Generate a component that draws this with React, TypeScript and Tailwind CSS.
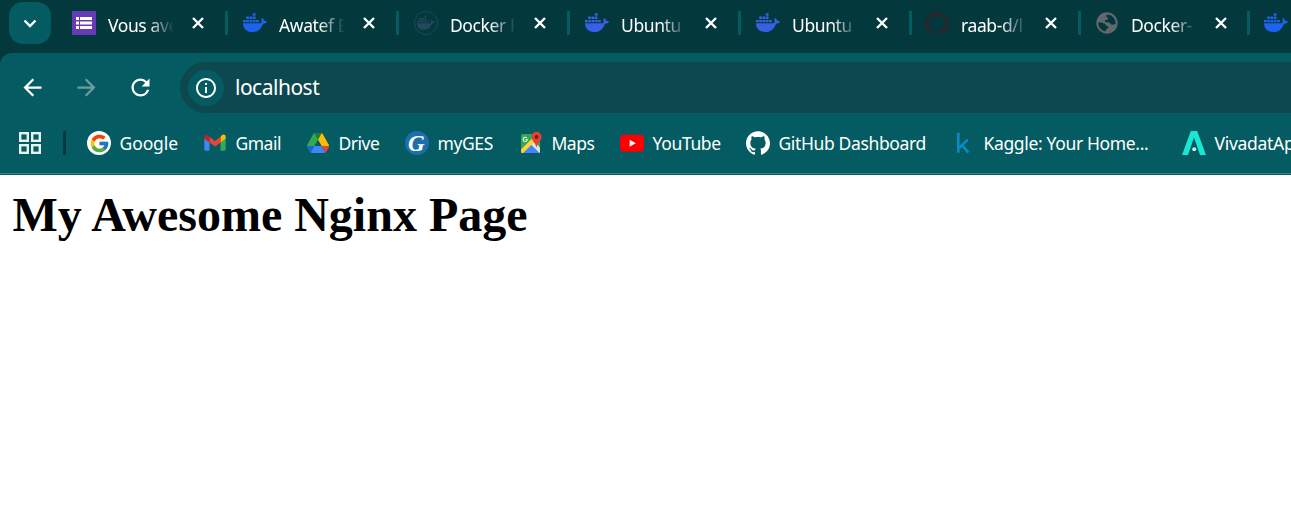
import type { ReactNode } from "react";
import { FcGoogle } from "react-icons/fc";
import { MdArrowBack, MdArrowForward, MdInfoOutline, MdRefresh } from "react-icons/md";
import { SiGithub } from "react-icons/si";

function Whale({ size = 24, color = "currentColor" }: { size?: number; color?: string }) {
  return (
    <svg width={size} height={size} viewBox="0 0 24 24" fill={color} className="shrink-0">
      <path d="M0 12.200h17c.9 0 1.500-.4 1.800-1-.7-1.500-.5-3.100.5-4.200 1 .7 1.700 1.700 1.800 2.900 1-.2 2.100 0 2.900.6-.6 1.500-2 2.200-3.900 2.200-1.800 4.900-5.100 8.300-10.300 8.300C3.800 21 0 17.900 0 12.200z" />
      <path d="M0 8.900h2.700v2.400H0zM3.200 8.900h2.700v2.400H3.200zM6.500 8.900h2.700v2.400H6.500zM9.800 8.900h2.700v2.400H9.800zM13.100 8.900h2.700v2.400h-2.700zM3.200 5.500h2.700v2.600H3.200zM6.500 5.500h2.700v2.600H6.500zM9.800 5.500h2.700v2.600H9.800zM9.800 2.200h2.700v2.500H9.800z" />
    </svg>
  );
}

function FormsIcon() {
  return (
    <svg width="24" height="24" viewBox="0 0 24 24">
      <rect width="24" height="24" rx="1" fill="#673ab7" />
      <g fill="#fff">
        <rect x="4" y="6" width="3" height="3" /><rect x="8" y="6" width="12" height="3" />
        <rect x="4" y="10.5" width="3" height="3" /><rect x="8" y="10.5" width="12" height="3" />
        <rect x="4" y="15" width="3" height="3" /><rect x="8" y="15" width="12" height="3" />
      </g>
    </svg>
  );
}

function DockerHubIcon() {
  return (
    <span className="flex size-6 items-center justify-center rounded-full border-[1.5px] border-[#23475c] text-[#23475c]">
      <Whale size={18} />
    </span>
  );
}

function GlobeIcon() {
  return (
    <svg width="24" height="24" viewBox="0 0 24 24">
      <circle cx="12" cy="12" r="10.7" fill="#63686d" />
      <path d="M12.500 3.600c-.8.300-1.300 1-1.200 1.800.1.900 1 1.300 1.800 1.200.5 1.200-.2 1.900-1.200 2.200-1.300.2-2.200.6-2 1.700.2.900 1.400.7 2.400.7 1.400 0 2.600.5 3.300 1.600.7 1 2 1 3.200.6.7-.2 1.200-.2 1.900-.4A8.800 8.800 0 0 0 12.500 3.600z" fill="#03383d" />
      <path d="M3.200 11.600c2.300-.3 4.700.1 6.300 1 1.300.8 1.200 2 2.100 2.500.8.400 1.900.2 1.900 1.100 0 1-1.300 1.200-2.100 2-.6.7-.4 1.700-1.200 2.300A8.900 8.900 0 0 1 3.200 11.600z" fill="#03383d" />
    </svg>
  );
}

function CloseIcon() {
  return (
    <svg width="12" height="12" viewBox="0 0 12 12" className="shrink-0">
      <path d="M1 1l10 10M11 1L1 11" stroke="#fff" strokeWidth="2.4" />
    </svg>
  );
}

function GmailIcon() {
  return (
    <svg width="24" height="24" viewBox="0 0 24 24">
      <path d="M1.300 7v11.300c0 .8.700 1.500 1.500 1.500h3.700V9.500z" fill="#4285f4" />
      <path d="M22.700 7v11.300c0 .8-.7 1.500-1.500 1.500h-3.700V9.500z" fill="#34a853" />
      <path d="M17.500 5.800v5.700l5.200-3.900V5.800c0-2-2.200-2.900-3.700-1.700z" fill="#fbbc04" />
      <path d="M6.500 11.500V5.800l5.500 4.100 5.500-4.100v5.700L12 15.600z" fill="#ea4335" />
      <path d="M1.300 5.800v1.800l5.200 3.900V5.800L5 4.500c-1.500-1.100-3.700-.4-3.700 1.300z" fill="#c5221f" />
    </svg>
  );
}

function DriveIcon() {
  return (
    <svg width="24" height="24" viewBox="0 0 24 24">
      <path d="M8.300 2h7.400L12 8.700z" fill="#188038" />
      <path d="M8.300 2C7.800 2.300 7.500 2.700 7.200 3.200L1.500 13.200c-.4.600-.5 1-.5 1.800h7.300L12 8.700z" fill="#34a853" />
      <path d="M15.700 2c.5.3.9.700 1.200 1.200l5.600 10c.4.600.5 1 .5 1.800h-7.300L12 8.700z" fill="#fbbc04" />
      <path d="M1 15h7.300l-3.600 6.500c-.6-.3-1-.8-1.300-1.300L1.500 17c-.3-.6-.5-1.200-.5-2z" fill="#1967d2" />
      <path d="M8.300 15h7.400l3.600 6.500c-.5.300-1 .5-1.600.5H6.300c-.6 0-1.100-.2-1.600-.5z" fill="#4285f4" />
      <path d="M15.700 15H23c0 .8-.2 1.400-.5 2l-1.900 3.200c-.3.500-.7 1-1.300 1.300z" fill="#ea4335" />
    </svg>
  );
}

function GesIcon() {
  return (
    <span className="flex size-6 items-center justify-center rounded-full bg-[#1b6fae] pr-0.5 font-['Liberation_Serif',serif] text-[23px] leading-none font-bold text-white italic">
      G
    </span>
  );
}

function MapsIcon() {
  return (
    <svg width="24" height="24" viewBox="0 0 24 24">
      <rect x="2" y="3" width="19" height="19" rx="1.500" fill="#34a853" />
      <path d="M4 22L12 13.500 20.500 22z" fill="#4285f4" />
      <path d="M12 13.500l3-3 6 6V21c0 .5-.2.800-.5 1z" fill="#dfe3e8" />
      <path d="M2 18.500L13.500 7l3 3L4 22h-.5A1.500 1.500 0 0 1 2 20.500z" fill="#ffd33c" />
      <path d="M8.800 8.100H6.600v1h1.100c-.2.700-.7 1-1.300 1a1.600 1.600 0 1 1 1-2.800l.7-.7a2.600 2.600 0 1 0 .7 1.500z" fill="#fff" />
      <path d="M17.500.8a5.100 5.100 0 0 0-5.100 5.100c0 3.700 4.100 5.300 5.100 10.800 1-5.500 5.100-7.100 5.100-10.800A5.100 5.100 0 0 0 17.500.8z" fill="#e34133" />
      <circle cx="17.500" cy="6" r="1.900" fill="#7c1b15" />
    </svg>
  );
}

function YoutubeIcon() {
  return (
    <svg width="24" height="24" viewBox="0 0 24 24">
      <rect x="0" y="3.700" width="24" height="17" rx="4" fill="#f00" />
      <path d="M9.600 8.700v7l6.200-3.500z" fill="#fff" />
    </svg>
  );
}

function KaggleIcon() {
  return (
    <svg width="24" height="24" viewBox="0 0 24 24" fill="none" stroke="#0a8bc4" strokeWidth="2.600">
      <path d="M7.300 1.800v20M16.800 8.600l-8.600 8.100M10.700 13.600l6.700 8" />
    </svg>
  );
}

function VivadataIcon() {
  return (
    <svg width="24" height="24" viewBox="0 0 24 24">
      <path d="M8.800 0h6.400L24 24h-6L12 6.500 6 24H0z" fill="#19e6d3" />
      <circle cx="12.200" cy="18.300" r="2" fill="#d5e9ea" />
    </svg>
  );
}

type Entry = { icon: ReactNode; title: string; slot: string };

const tabs: Entry[] = [
  { icon: <FormsIcon />, title: "Vous avez", slot: "w-[171px]" },
  { icon: <Whale color="#1d63ed" />, title: "Awatef E", slot: "w-[171px]" },
  { icon: <DockerHubIcon />, title: "Docker H", slot: "w-[171px]" },
  { icon: <Whale color="#3860e4" />, title: "Ubuntu", slot: "w-[171px]" },
  { icon: <Whale color="#3860e4" />, title: "Ubuntu", slot: "w-[169px]" },
  { icon: <SiGithub size={24} color="#24292e" />, title: "raab-d/l", slot: "w-[170px]" },
  { icon: <GlobeIcon />, title: "Docker-", slot: "w-[169px]" },
];

const bookmarks: Entry[] = [
  {
    icon: (
      <span className="flex size-6 items-center justify-center rounded-full bg-white">
        <FcGoogle size={21} />
      </span>
    ),
    title: "Google", slot: "w-[116px] tracking-[-0.100px]",
  },
  { icon: <GmailIcon />, title: "Gmail", slot: "w-[103px] tracking-[-0.500px]" },
  { icon: <DriveIcon />, title: "Drive", slot: "w-[99px] tracking-[-0.500px]" },
  { icon: <GesIcon />, title: "myGES", slot: "w-[114px] tracking-[-0.400px]" },
  { icon: <MapsIcon />, title: "Maps", slot: "w-[101px] tracking-[-0.500px]" },
  { icon: <YoutubeIcon />, title: "YouTube", slot: "w-[126px] tracking-[-0.350px]" },
  { icon: <SiGithub size={24} color="#fff" />, title: "GitHub Dashboard", slot: "w-[205px] tracking-[-0.370px]" },
  { icon: <KaggleIcon />, title: "Kaggle: Your Home...", slot: "w-[231px] tracking-[-0.350px]" },
  { icon: <VivadataIcon />, title: "VivadatApp", slot: "w-[140px] tracking-[-0.300px]" },
];

export default function App() {
  return (
    <div className="flex h-[521px] w-full flex-col overflow-hidden bg-white font-['Noto_Sans',sans-serif] text-white">
      <div className="flex h-[53px] shrink-0 overflow-hidden bg-[#03383d]">
        <div className="mt-0.5 ml-[9px] flex h-[42px] w-[42px] shrink-0 items-center justify-center rounded-[14px] bg-[#045b62]">
          <svg width="14" height="9" viewBox="0 0 14 9">
            <path d="M1.500 1.500L7 7l5.500-5.500" fill="none" stroke="#fff" strokeWidth="2.400" />
          </svg>
        </div>
        <div className="ml-[21px] flex pt-[11px]">
          {tabs.map((tab, i) => (
            <div key={i} className={`flex h-6 shrink-0 items-center ${tab.slot}`}>
              <span className="flex w-6 shrink-0 justify-center">{tab.icon}</span>
              <span className="ml-3 w-[66px] shrink-0 overflow-hidden mask-r-from-60% mask-r-to-100% pt-[3px] text-[17.5px] leading-6 tracking-[-0.400px] whitespace-nowrap">
                {tab.title}
              </span>
              <span className="ml-[18px] flex"><CloseIcon /></span>
              <span className="ml-auto h-6 w-[3px] shrink-0 bg-[#045b62]" />
              <span className={i < 4 ? "w-[15px] shrink-0" : i === 4 ? "w-[13px] shrink-0" : "w-[14px] shrink-0"} />
            </div>
          ))}
          <Whale color="#1d63ed" />
        </div>
      </div>

      <div className="shrink-0 bg-[#03383d]">
        <div className="flex h-[122px] flex-col rounded-tl-[12px] bg-[#045b62]">
          <div className="flex h-[60px] shrink-0 items-center pt-[9px]">
            <MdArrowBack size={27} className="ml-[19px] shrink-0" />
            <MdArrowForward size={27} className="ml-[27px] shrink-0 text-[#6d9da1]" />
            <MdRefresh size={27} className="ml-[27px] shrink-0" />
            <div className="ml-[26px] flex h-[51px] flex-1 items-center rounded-l-full bg-[#0e484f] pl-2">
              <span className="flex size-9 shrink-0 items-center justify-center rounded-full bg-[#045b62]">
                <MdInfoOutline size={24} />
              </span>
              <span className="ml-[11px] text-[21px] leading-none tracking-[-0.500px]">localhost</span>
            </div>
          </div>
          <div className="flex h-[60px] items-center">
            <svg width="22" height="22" viewBox="0 0 22 22" className="ml-[19px] shrink-0">
              <g fill="none" stroke="#e8f0f0" strokeWidth="2.400">
                <rect x="1.200" y="1.200" width="7.600" height="7.600" />
                <rect x="13.200" y="1.200" width="7.600" height="7.600" />
                <rect x="1.200" y="13.200" width="7.600" height="7.600" />
                <rect x="13.200" y="13.200" width="7.600" height="7.600" />
              </g>
            </svg>
            <span className="ml-[22px] h-6 w-[3px] shrink-0 rounded-full bg-[#03383d]" />
            <div className="ml-[21px] flex flex-1 overflow-hidden">
              {bookmarks.map((b) => (
                <div key={b.title} className={`flex h-6 shrink-0 items-center ${b.slot}`}>
                  <span className="flex w-6 shrink-0 justify-center">{b.icon}</span>
                  <span className="ml-[8.500px] text-[17.5px] leading-6 whitespace-nowrap">{b.title}</span>
                </div>
              ))}
            </div>
          </div>
          <div className="mt-auto h-0.5 border-t border-[#3d7f84]" />
        </div>
      </div>

      <main className="flex-1 bg-white px-[12.500px] pt-3 text-black">
        <h1 className="font-['Liberation_Serif',serif] text-[48px] leading-[55px] font-bold">My Awesome Nginx Page</h1>
      </main>
    </div>
  );
}
